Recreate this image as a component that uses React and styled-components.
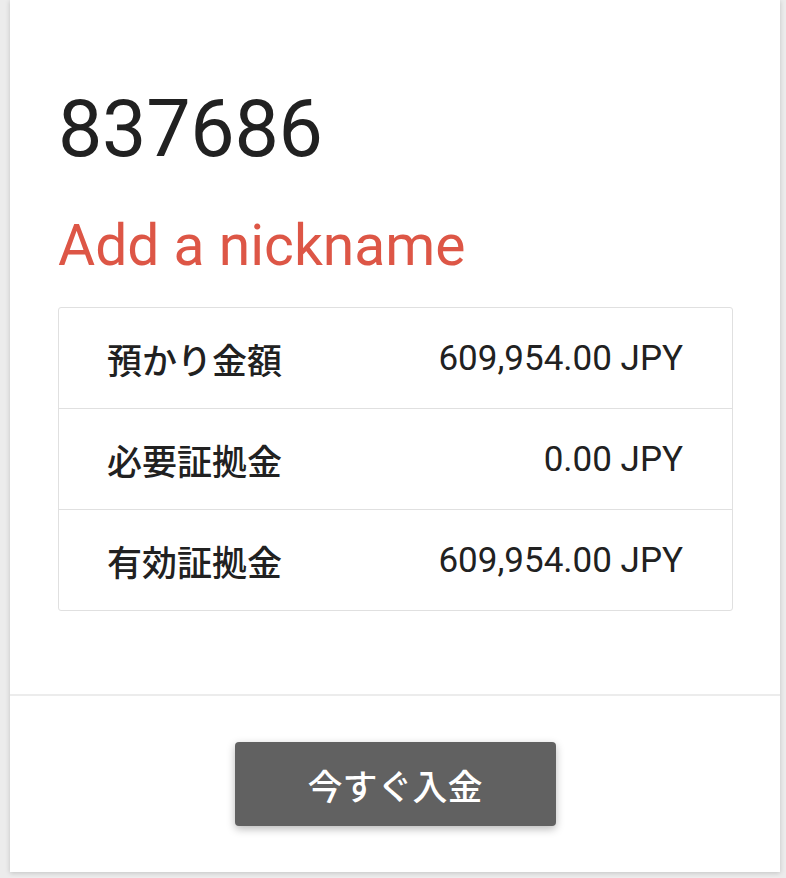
import styled, { createGlobalStyle } from "styled-components";

const GlobalStyle = createGlobalStyle`
  html, body {
    margin: 0;
    padding: 0;
    background: #ececec;
  }
  body {
    font-family: Roboto, "Noto Sans CJK JP", sans-serif;
    -webkit-font-smoothing: antialiased;
  }
`;

const Page = styled.div`
  padding: 0 6px 5px 10px;
`;

const Card = styled.section`
  background: #fff;
  box-shadow: 0 1px 5px rgba(0, 0, 0, 0.18);
`;

const Body = styled.div`
  padding: 90px 47px 83px 48px;
`;

const AccountId = styled.h1`
  margin: 0;
  font-size: 79px;
  line-height: 1;
  font-weight: 400;
  color: #212121;
  letter-spacing: -0.3px;
`;

const Nickname = styled.a`
  display: block;
  margin-top: 48px;
  font-size: 57px;
  line-height: 1;
  font-weight: 400;
  color: #dd5646;
  cursor: pointer;
`;

const Summary = styled.div`
  margin-top: 33px;
  border: 1px solid #e0e0e0;
  border-radius: 3px;
`;

const Row = styled.div`
  display: flex;
  align-items: center;
  justify-content: space-between;
  height: 100px;
  padding: 0 49px 0 48px;
  font-size: 35px;
  color: #212121;

  & + & {
    border-top: 1px solid #e0e0e0;
  }
`;

const Label = styled.span`
  font-family: "Noto Sans CJK JP", sans-serif;
  font-weight: 500;
`;

const Value = styled.span`
  font-family: Roboto, sans-serif;
`;

const Footer = styled.div`
  display: flex;
  justify-content: center;
  padding: 46px 0 46px;
  border-top: 2px solid #ececec;
`;

const DepositButton = styled.button`
  width: 321px;
  height: 84px;
  border: 0;
  border-radius: 4px;
  background: #616161;
  color: #fff;
  font-family: "Noto Sans CJK JP", sans-serif;
  font-size: 35px;
  font-weight: 500;
  box-shadow: 0 3px 9px rgba(0, 0, 0, 0.28);
  cursor: pointer;
`;

const rows = [
  { label: "預かり金額", value: "609,954.00 JPY" },
  { label: "必要証拠金", value: "0.00 JPY" },
  { label: "有効証拠金", value: "609,954.00 JPY" },
];

function App() {
  return (
    <>
      <GlobalStyle />
      <Page>
        <Card>
          <Body>
            <AccountId>837686</AccountId>
            <Nickname>Add a nickname</Nickname>
            <Summary>
              {rows.map(r => (
                <Row key={r.label}>
                  <Label>{r.label}</Label>
                  <Value>{r.value}</Value>
                </Row>
              ))}
            </Summary>
          </Body>
          <Footer>
            <DepositButton>今すぐ入金</DepositButton>
          </Footer>
        </Card>
      </Page>
    </>
  );
}

export default App;
